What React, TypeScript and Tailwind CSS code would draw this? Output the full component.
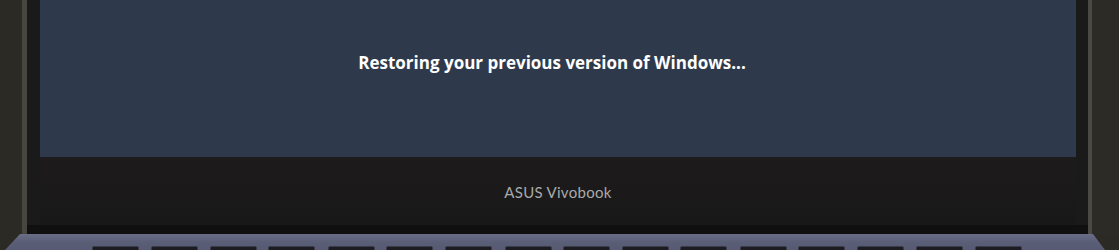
import React from "react";

const keyXs = [92, 151, 210, 268, 328, 386, 445, 505, 563, 622, 680, 740, 798, 857, 916, 975];

export default function App() {
  return (
    <div className="w-[1119px] h-[250px] bg-[#2b2a25] flex flex-col overflow-hidden">
      <div className="flex h-[234px]">
        <div className="w-[22px] bg-[#2b2a25]" />
        <div className="w-[5px] bg-[#47463f]" />
        <div className="w-[1061px] bg-[#1b1a1a] flex flex-col pl-[13px] pr-[12px]">
          <div className="h-[157px] bg-[#2e3a4b] flex justify-center pt-[51px] pr-[12px]">
            <span
              className="text-white font-bold text-[17px] leading-[24px]"
              style={{ fontFamily: '"Open Sans", "Noto Sans", sans-serif' }}
            >
              Restoring your previous version of Windows...
            </span>
          </div>
          <div className="flex-1 flex justify-center pt-[25px] bg-gradient-to-b from-[#1d1b1c] to-[#191818]">
            <span
              className="text-[#a9a9ab] text-[15px] leading-[20px] tracking-[0.3px]"
              style={{ fontFamily: 'Lato, "Noto Sans", sans-serif' }}
            >
              ASUS Vivobook
            </span>
          </div>
          <div className="h-[9px] bg-[#111011] -mx-[13px]" />
        </div>
        <div className="w-[4px] bg-[#4a4943]" />
        <div className="flex-1 bg-[#2d2b26]" />
      </div>
      <div
        className="relative h-[16px] bg-gradient-to-b from-[#6a6d86] via-[#5b5e77] to-[#575a72]"
        style={{ clipPath: "polygon(20px 0, 1093px 0, 1105px 16px, 5px 16px)" }}
      >
        {keyXs.map((x) => (
          <div
            key={x}
            className="absolute top-[12px] h-[8px] w-[47px] rounded-[2px] bg-[#1c1c22] border border-[#3a3b48]"
            style={{ left: x }}
          />
        ))}
      </div>
    </div>
  );
}
